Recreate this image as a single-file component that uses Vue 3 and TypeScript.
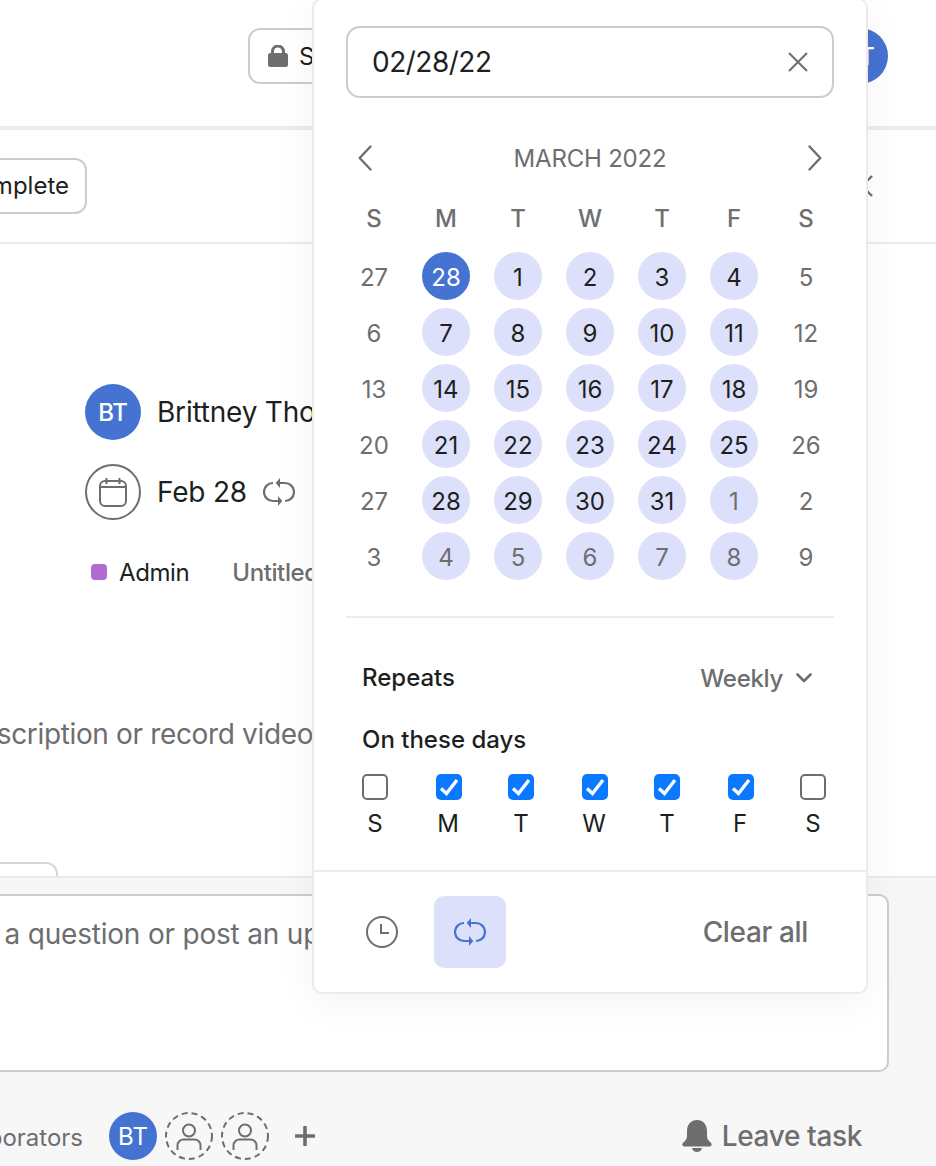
<template>
  <div class="page">
    <header class="topbar">
      <button class="btn btn--share">
        <svg class="lock" width="20" height="22" viewBox="0 0 20 22">
          <path d="M4.5 9V6.5a5.5 5.5 0 0 1 11 0V9" fill="none" stroke="#6d6e6f" stroke-width="3" />
          <rect x="0" y="8" width="20" height="14" rx="2.5" fill="#6d6e6f" />
        </svg>
        Share
      </button>
      <div class="avatar avatar--top">BT</div>
    </header>

    <div class="toolbar">
      <div class="toolbar__left">
        <button class="btn btn--complete">Mark complete</button>
      </div>
      <svg class="toolbar__close" width="24" height="24" viewBox="0 0 24 24">
        <path d="M2 2l20 20M22 2L2 22" fill="none" stroke="#6d6e6f" stroke-width="2.4" />
      </svg>
    </div>

    <main class="body">
      <div class="field">
        <div class="avatar">BT</div>
        <span class="field__text">Brittney Thompson</span>
      </div>
      <div class="field field--date">
        <div class="date-circle">
          <svg width="30" height="30" viewBox="0 0 30 30">
            <rect x="2" y="4" width="26" height="25" rx="5" fill="none" stroke="#6d6e6f" stroke-width="2" />
            <path d="M2 10h26M8.500 1v6M21.500 1v6" fill="none" stroke="#6d6e6f" stroke-width="2" />
          </svg>
        </div>
        <span class="field__text">Feb 28</span>
        <svg class="repeat" width="32" height="32" viewBox="0 0 32 32">
          <path d="M17 7H22A9 9 0 0 1 22 25M15 25H10A9 9 0 0 1 10 7" fill="none" stroke="#6d6e6f" stroke-width="2.200" />
          <path d="M12.700 7L17 2V12ZM19.300 25L15 20V30Z" fill="#6d6e6f" />
        </svg>
      </div>
      <div class="project">
        <span class="project__dot"></span>
        <span class="project__name">Admin</span>
        <span class="project__section">Untitled section</span>
      </div>
      <p class="description">Add a description or record video</p>
      <div class="tab"></div>
    </main>

    <footer class="footer">
      <div class="comment">Ask a question or post an update...</div>
      <div class="collab">
        <div class="collab__label"><span>Collaborators</span></div>
        <div class="avatar avatar--small">BT</div>
        <svg v-for="n in 2" :key="n" class="ghost" width="48" height="48" viewBox="0 0 48 48">
          <circle cx="24" cy="24" r="23" fill="none" stroke="#6d6e6f" stroke-width="2" stroke-dasharray="6 4.030" />
          <circle cx="24" cy="18.500" r="6" fill="none" stroke="#6d6e6f" stroke-width="2" />
          <path d="M12.500 38V33.500a6 6 0 0 1 6-6h11a6 6 0 0 1 6 6V38" fill="none" stroke="#6d6e6f" stroke-width="2" />
        </svg>
        <svg class="plus" width="20" height="20" viewBox="0 0 20 20">
          <path d="M10 1v18M1 10h18" fill="none" stroke="#6d6e6f" stroke-width="3.600" stroke-linecap="round" />
        </svg>
        <div class="leave">
          <svg width="30" height="32" viewBox="0 0 30 32">
            <path d="M15 0C21 0 25 4.500 25 11v5c0 3 1.500 4.500 4 7 1.500 1.500.5 3.500-1.500 3.500h-25c-2 0-3-2-1.500-3.500 2.500-2.500 4-4 4-7v-5C5 4.500 9 0 15 0z" fill="#6d6e6f" />
            <path d="M10 28h10c-.5 2.500-2.500 4-5 4s-4.500-1.500-5-4z" fill="#6d6e6f" />
          </svg>
          <span>Leave task</span>
        </div>
      </div>
    </footer>

    <section class="popover">
      <div class="popover__main">
        <div class="date-input">
          <span>02/28/22</span>
          <svg width="20" height="20" viewBox="0 0 20 20">
            <path d="M1 1l18 18M19 1L1 19" fill="none" stroke="#6d6e6f" stroke-width="2" />
          </svg>
        </div>

        <div class="month">
          <svg width="14" height="26" viewBox="0 0 14 26">
            <path d="M12.500 1.500L1.700 13l10.800 11.500" fill="none" stroke="#6d6e6f" stroke-width="2.400" stroke-linecap="round" stroke-linejoin="round" />
          </svg>
          <span>MARCH 2022</span>
          <svg width="14" height="26" viewBox="0 0 14 26">
            <path d="M1.500 1.500L12.300 13 1.500 24.500" fill="none" stroke="#6d6e6f" stroke-width="2.400" stroke-linecap="round" stroke-linejoin="round" />
          </svg>
        </div>

        <div class="weekdays">
          <span v-for="(d, i) in weekdays" :key="i">{{ d }}</span>
        </div>

        <div class="days">
          <div v-for="(day, i) in days" :key="i" class="day" :class="`day--${day.kind}`">
            <span>{{ day.label }}</span>
          </div>
        </div>

        <div class="divider"></div>

        <div class="repeats">
          <span class="label">Repeats</span>
          <span class="repeats__value">
            Weekly
            <svg width="16" height="10" viewBox="0 0 16 10">
              <path d="M1.500 1.500L8 8l6.500-6.500" fill="none" stroke="#6d6e6f" stroke-width="2.600" stroke-linecap="round" stroke-linejoin="round" />
            </svg>
          </span>
        </div>

        <div class="label label--days">On these days</div>
        <div class="checks">
          <div v-for="(d, i) in weekdays" :key="i" class="check">
            <span class="check__box" :class="{ 'check__box--on': i > 0 && i < 6 }">
              <svg v-if="i > 0 && i < 6" width="26" height="26" viewBox="0 0 26 26">
                <path d="M5 14.500l5.500 5L21 6" fill="none" stroke="#fff" stroke-width="3.400" />
              </svg>
            </span>
            <span class="check__label">{{ d }}</span>
          </div>
        </div>
      </div>

      <div class="popover__footer">
        <svg class="clock" width="32" height="32" viewBox="0 0 32 32">
          <circle cx="16" cy="16" r="15" fill="none" stroke="#6d6e6f" stroke-width="2" />
          <path d="M15 8v9h8" fill="none" stroke="#6d6e6f" stroke-width="2" />
        </svg>
        <div class="repeat-btn">
          <svg width="32" height="32" viewBox="0 0 32 32">
            <path d="M17 7H22A9 9 0 0 1 22 25M15 25H10A9 9 0 0 1 10 7" fill="none" stroke="#4573d2" stroke-width="2.200" />
            <path d="M12.700 7L17 2V12ZM19.300 25L15 20V30Z" fill="#4573d2" />
          </svg>
        </div>
        <span class="clear">Clear all</span>
      </div>
    </section>
  </div>
</template>

<script setup lang="ts">
import { computed } from 'vue'

interface Day {
  label: number
  kind: 'muted' | 'selected' | 'range' | 'range-out'
}

const weekdays = ['S', 'M', 'T', 'W', 'T', 'F', 'S']

const labels = [
  27, 28, 1, 2, 3, 4, 5,
  6, 7, 8, 9, 10, 11, 12,
  13, 14, 15, 16, 17, 18, 19,
  20, 21, 22, 23, 24, 25, 26,
  27, 28, 29, 30, 31, 1, 2,
  3, 4, 5, 6, 7, 8, 9
]

const days = computed<Day[]>(() =>
  labels.map((label, i) => {
    const col = i % 7
    if (col === 0 || col === 6) return { label, kind: 'muted' }
    if (i === 1) return { label, kind: 'selected' }
    if (i >= 33) return { label, kind: 'range-out' }
    return { label, kind: 'range' }
  })
)
</script>

<style>
html,
body {
  margin: 0;
  background: #fff;
}
</style>

<style scoped>
.page {
  position: relative;
  display: flex;
  flex-direction: column;
  width: 936px;
  height: 1166px;
  overflow: hidden;
  background: #fff;
  color: #1e1f21;
  font-family: Inter, "Liberation Sans", sans-serif;
}

.btn {
  display: flex;
  align-items: center;
  flex: none;
  height: 56px;
  padding-bottom: 2px;
  background: #fff;
  border: 2px solid #cfcbcb;
  border-radius: 12px;
  color: #1e1f21;
  font: inherit;
  font-size: 24px;
  white-space: nowrap;
}

.topbar {
  display: flex;
  align-items: flex-start;
  flex: none;
  height: 126px;
  border-bottom: 4px solid #edeaea;
}

.btn--share {
  margin: 28px 0 0 248px;
  padding: 0 18px;
  gap: 11px;
}

.avatar--top {
  margin: 28px 48px 0 auto;
}

.toolbar {
  display: flex;
  align-items: center;
  flex: none;
  height: 112px;
  border-bottom: 2px solid #edeaea;
}

.toolbar__left {
  display: flex;
  justify-content: flex-end;
  width: 87px;
}

.btn--complete {
  padding: 0 16px 2px;
}

.toolbar__close {
  margin-left: auto;
  margin-right: 62px;
}

.body {
  display: flex;
  flex-direction: column;
  flex: 1;
  min-height: 0;
  padding: 140px 0 0 85px;
  overflow: hidden;
}

.avatar {
  display: flex;
  align-items: center;
  justify-content: center;
  flex: none;
  width: 56px;
  height: 56px;
  border-radius: 50%;
  background: #4573d2;
  color: #fff;
  font-size: 24px;
  font-weight: 500;
}

.avatar--small {
  width: 48px;
  height: 48px;
  font-size: 24px;
  font-weight: 400;
}

.field {
  display: flex;
  align-items: center;
  gap: 16px;
  height: 56px;
  font-size: 28px;
  letter-spacing: -0.2px;
  white-space: nowrap;
}

.field--date {
  margin-top: 24px;
}

.date-circle {
  display: flex;
  align-items: center;
  justify-content: center;
  box-sizing: border-box;
  width: 56px;
  height: 56px;
  border: 2px solid #6d6e6f;
  border-radius: 50%;
}

.repeat {
  flex: none;
}

.project {
  display: flex;
  align-items: center;
  height: 32px;
  margin: 36px 0 0 6px;
  font-size: 24px;
  letter-spacing: -0.4px;
  white-space: nowrap;
}

.project__dot {
  width: 16px;
  height: 16px;
  margin-right: 12px;
  border-radius: 4px;
  background: #b36bd4;
}

.project__section {
  margin-left: 43px;
  color: #6d6e6f;
  font-weight: 500;
}

.description {
  margin: 126px 0 0 -204px;
  color: #6d6e6f;
  font-size: 28px;
  letter-spacing: -0.35px;
  line-height: 40px;
  white-space: nowrap;
}

.tab {
  flex: none;
  width: 200px;
  height: 14px;
  margin: auto 0 0 -227px;
  box-sizing: border-box;
  border: 2px solid #d9d6d6;
  border-bottom: none;
  border-radius: 12px 12px 0 0;
}

.footer {
  flex: none;
  height: 290px;
  padding-top: 16px;
  box-sizing: border-box;
  border-top: 2px solid #edeaea;
  background: #f7f7f7;
}

.comment {
  box-sizing: border-box;
  height: 178px;
  margin: 0 47px 0 -60px;
  padding: 18px 0 0 6px;
  background: #fff;
  border: 2px solid #cfcbcb;
  border-radius: 10px;
  color: #6d6e6f;
  font-size: 28px;
  letter-spacing: -0.2px;
  line-height: 40px;
  white-space: nowrap;
}

.collab {
  display: flex;
  align-items: center;
  height: 48px;
  margin-top: 40px;
}

.collab__label {
  display: flex;
  justify-content: flex-end;
  width: 83px;
  margin-right: 26px;
  padding-top: 2px;
  color: #6d6e6f;
  font-size: 24px;
  white-space: nowrap;
}

.ghost {
  flex: none;
  margin-left: 8px;
}

.plus {
  flex: none;
  margin-left: 26px;
}

.leave {
  display: flex;
  align-items: center;
  gap: 10px;
  margin-left: auto;
  margin-right: 74px;
  color: #6d6e6f;
  font-size: 28px;
  font-weight: 500;
  letter-spacing: -0.35px;
}

.popover {
  position: absolute;
  top: -2px;
  left: 312px;
  box-sizing: border-box;
  width: 556px;
  background: #fff;
  border: 2px solid #edeaea;
  border-radius: 10px;
  box-shadow: 0 8px 40px rgba(0, 0, 0, 0.05);
}

.popover__main {
  padding: 26px 32px 30px;
}

.date-input {
  display: flex;
  align-items: center;
  justify-content: space-between;
  box-sizing: border-box;
  height: 72px;
  padding: 0 24px;
  border: 2px solid #cfcbcb;
  border-radius: 14px;
  font-size: 28px;
  letter-spacing: -0.5px;
}

.month {
  display: flex;
  align-items: center;
  justify-content: space-between;
  height: 48px;
  margin-top: 36px;
  padding: 0 12px;
  color: #6d6e6f;
  font-size: 24px;
  letter-spacing: -0.2px;
}

.weekdays,
.days {
  display: grid;
  grid-template-columns: repeat(7, 72px);
  margin: 0 -8px;
}

.weekdays {
  height: 40px;
  margin-top: 16px;
  color: #6d6e6f;
  font-size: 24px;
  font-weight: 500;
  line-height: 42px;
  text-align: center;
}

.days {
  grid-auto-rows: 56px;
  margin-top: 10px;
  font-size: 24px;
}

.day {
  display: flex;
  align-items: center;
  justify-content: center;
}

.day span {
  display: flex;
  align-items: center;
  justify-content: center;
  box-sizing: border-box;
  width: 48px;
  height: 48px;
  padding-top: 2px;
  border-radius: 50%;
}

.day--muted {
  color: #6d6e6f;
}

.day--range span {
  background: #dde0fb;
}

.day--range-out span {
  background: #dde0fb;
  color: #6d6e6f;
}

.day--selected span {
  background: #4573d2;
  color: #fff;
}

.divider {
  height: 2px;
  margin-top: 32px;
  background: #edeaea;
}

.repeats {
  display: flex;
  align-items: center;
  justify-content: space-between;
  height: 40px;
  margin-top: 40px;
  padding: 0 22px 0 16px;
}

.label {
  font-size: 24px;
  font-weight: 500;
  line-height: 40px;
}

.label--days {
  height: 40px;
  margin-top: 22px;
  padding-left: 16px;
}

.repeats__value {
  display: flex;
  align-items: center;
  gap: 13px;
  color: #6d6e6f;
  font-size: 24px;
  font-weight: 500;
  letter-spacing: -0.3px;
}

.checks {
  display: grid;
  grid-template-columns: repeat(7, 73px);
  margin: 14px 0 0 -7.5px;
}

.check {
  display: flex;
  flex-direction: column;
  align-items: center;
}

.check:nth-child(even) .check__box {
  transform: translateX(1px);
}

.check__box {
  display: block;
  box-sizing: border-box;
  width: 26px;
  height: 26px;
  border: 2px solid #6d6e6f;
  border-radius: 5px;
}

.check__box--on {
  background: #0a78ff;
  border: none;
}

.check__box svg {
  display: block;
}

.check__label {
  height: 32px;
  margin-top: 8px;
  font-size: 24px;
  line-height: 32px;
}

.popover__footer {
  display: flex;
  align-items: center;
  padding: 24px 58px 24px 52px;
  border-top: 2px solid #edeaea;
}

.clock {
  flex: none;
}

.repeat-btn {
  display: flex;
  align-items: center;
  justify-content: center;
  width: 72px;
  height: 72px;
  margin-left: 36px;
  border-radius: 10px;
  background: #dde0fb;
}

.clear {
  margin-left: auto;
  color: #6d6e6f;
  font-size: 28px;
  font-weight: 500;
  letter-spacing: -0.35px;
}
</style>
